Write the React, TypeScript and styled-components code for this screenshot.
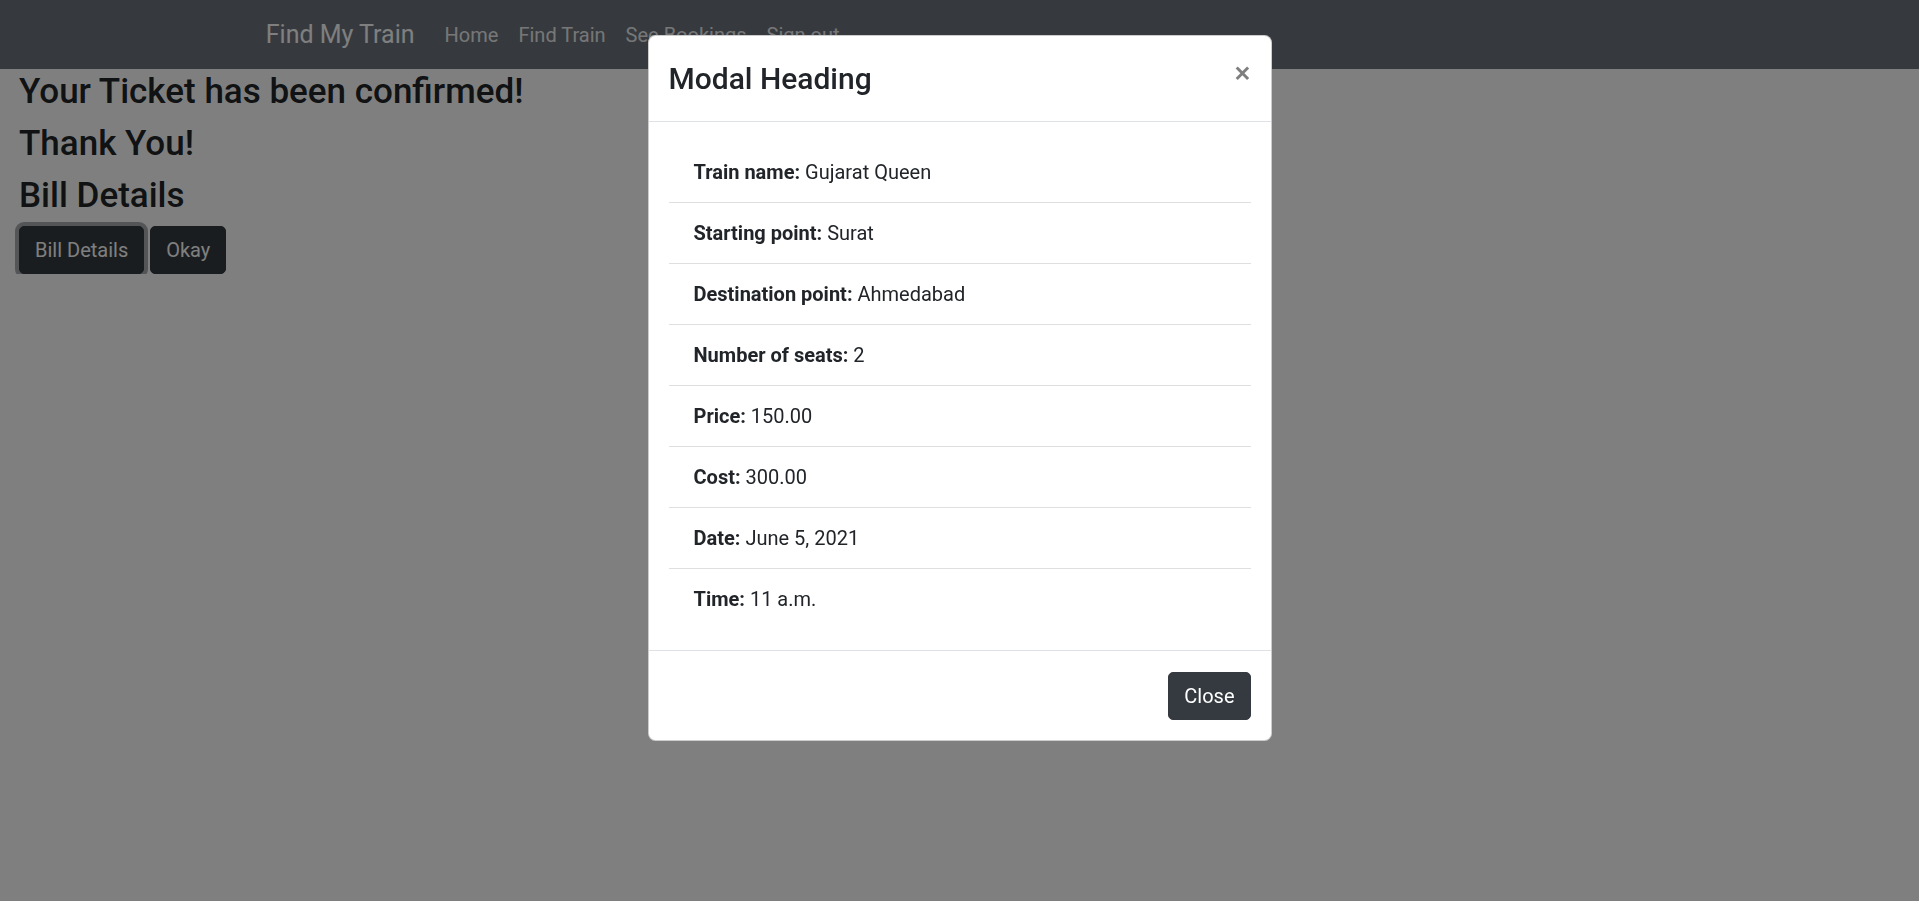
import React from "react";
import styled, { createGlobalStyle } from "styled-components";

const GlobalStyle = createGlobalStyle`
  html, body {
    margin: 0;
    padding: 0;
  }
  body {
    font-family: Roboto, "Liberation Sans", Arial, sans-serif;
    font-size: 20px;
    line-height: 1.5;
    color: #212529;
    background: #fff;
    overflow: hidden;
  }
  * { box-sizing: border-box; }
`;

const Navbar = styled.nav`
  height: 69px;
  background: #6c757d;
  display: flex;
  align-items: center;
`;

const NavContainer = styled.div`
  width: 100%;
  max-width: 1425px;
  margin: 0 auto;
  padding: 0 18.75px;
  display: flex;
  align-items: center;
`;

const Brand = styled.a`
  font-size: 25px;
  line-height: 37.5px;
  color: #fff;
  margin-right: 20px;
  text-decoration: none;
`;

const NavList = styled.ul`
  list-style: none;
  margin: 0;
  padding: 0;
  display: flex;
`;

const NavLink = styled.a`
  display: block;
  padding: 0 10px;
  font-size: 20px;
  line-height: 30px;
  color: rgba(255, 255, 255, 0.9);
  text-decoration: none;
`;

const Main = styled.main`
  padding: 1px 19px 0;
`;

const Heading = styled.h3`
  font-size: 35px;
  font-weight: 500;
  line-height: 42px;
  margin: 0 0 10px;
  color: #212529;
  &:first-of-type {
    padding-top: 1px;
  }
  &:last-of-type {
    margin-bottom: 9px;
  }
`;

const ButtonRow = styled.div`
  display: flex;
  gap: 6px;
`;

const DarkButton = styled.button<{ $focused?: boolean }>`
  font-family: inherit;
  font-size: 20px;
  line-height: 30px;
  padding: 7.75px 15px;
  border: 1px solid #343a40;
  border-radius: 5px;
  background: #343a40;
  color: #fff;
  cursor: pointer;
  box-shadow: ${(p) => (p.$focused ? "0 0 0 4px rgba(82, 88, 93, 0.5)" : "none")};
`;

const Backdrop = styled.div`
  position: fixed;
  inset: 0;
  background: rgba(0, 0, 0, 0.5);
  z-index: 10;
`;

const ModalLayer = styled.div`
  position: fixed;
  inset: 0;
  z-index: 20;
`;

const Dialog = styled.div`
  width: 624px;
  margin: 35px auto;
  background: #fff;
  border: 1px solid rgba(0, 0, 0, 0.2);
  border-radius: 7.5px;
  display: flex;
  flex-direction: column;
`;

const ModalHeader = styled.div`
  display: flex;
  align-items: flex-start;
  justify-content: space-between;
  padding: 20px;
  border-bottom: 1px solid #dee2e6;
`;

const ModalTitle = styled.h4`
  margin: 0;
  font-size: 30px;
  font-weight: 500;
  line-height: 45px;
  color: #212529;
`;

const CloseX = styled.button`
  font-family: inherit;
  background: transparent;
  border: 0;
  padding: 20px;
  margin: -18px -20px -20px auto;
  font-size: 30px;
  font-weight: 500;
  line-height: 1;
  color: #000;
  opacity: 0.5;
  cursor: pointer;
`;

const ModalBody = styled.div`
  padding: 20px 20px 21px;
`;

const List = styled.ul`
  list-style: none;
  margin: 0;
  padding: 0;
`;

const ListItem = styled.li`
  padding: 15px 25px;
  line-height: 30px;
  border-bottom: 1px solid rgba(0, 0, 0, 0.125);
  &:last-child {
    border-bottom: 0;
  }
`;

const Label = styled.strong`
  font-weight: 700;
`;

const ModalFooter = styled.div`
  display: flex;
  justify-content: flex-end;
  padding: 15px;
  border-top: 1px solid #dee2e6;
  & > * {
    margin: 6px 5px 5px;
  }
`;

const details: [string, string][] = [
  ["Train name:", "Gujarat Queen"],
  ["Starting point:", "Surat"],
  ["Destination point:", "Ahmedabad"],
  ["Number of seats:", "2"],
  ["Price:", "150.00"],
  ["Cost:", "300.00"],
  ["Date:", "June 5, 2021"],
  ["Time:", "11 a.m."],
];

export default function App() {
  return (
    <>
      <GlobalStyle />
      <Navbar>
        <NavContainer>
          <Brand href="#">Find My Train</Brand>
          <NavList>
            <li><NavLink href="#">Home</NavLink></li>
            <li><NavLink href="#">Find Train</NavLink></li>
            <li><NavLink href="#">See Bookings</NavLink></li>
            <li><NavLink href="#">Sign out</NavLink></li>
          </NavList>
        </NavContainer>
      </Navbar>
      <Main>
        <Heading>Your Ticket has been confirmed!</Heading>
        <Heading>Thank You!</Heading>
        <Heading>Bill Details</Heading>
        <ButtonRow>
          <DarkButton $focused>Bill Details</DarkButton>
          <DarkButton>Okay</DarkButton>
        </ButtonRow>
      </Main>
      <Backdrop />
      <ModalLayer>
        <Dialog>
          <ModalHeader>
            <ModalTitle>Modal Heading</ModalTitle>
            <CloseX aria-label="Close">×</CloseX>
          </ModalHeader>
          <ModalBody>
            <List>
              {details.map(([k, v]) => (
                <ListItem key={k}>
                  <Label>{k}</Label> {v}
                </ListItem>
              ))}
            </List>
          </ModalBody>
          <ModalFooter>
            <DarkButton>Close</DarkButton>
          </ModalFooter>
        </Dialog>
      </ModalLayer>
    </>
  );
}
